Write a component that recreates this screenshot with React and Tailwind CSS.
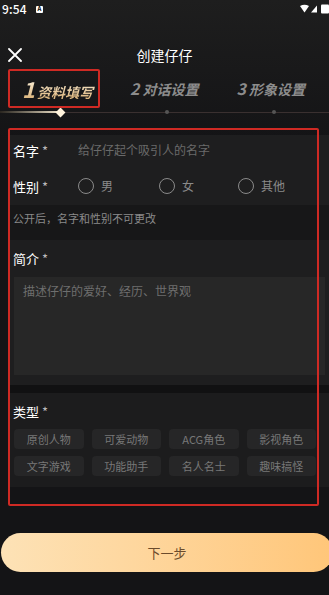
import React from "react";

const F = { fontFamily: '"Noto Sans CJK SC", "Noto Sans", sans-serif' };

function Radio({ label, className = "" }) {
  return (
    <div className={"flex items-center " + className}>
      <span className="w-[16px] h-[16px] rounded-full border-[1.5px] border-[#8a8a8a]" />
      <span className="ml-[7px] text-[12px] text-[#8a8a8a] leading-none">{label}</span>
    </div>
  );
}

const chips = ["原创人物", "可爱动物", "ACG角色", "影视角色", "文字游戏", "功能助手", "名人名士", "趣味搞怪"];

export default function App() {
  return (
    <div className="relative w-[329px] h-[595px] overflow-hidden bg-[#141416]" style={F}>
      <div className="absolute inset-x-0 top-0 h-[140px] bg-gradient-to-b from-[#1e1e1e] to-[#141416] pointer-events-none" />
      <div className="relative flex flex-col">
        {/* status bar */}
        <div className="h-[18px] flex items-center justify-between pl-[2px]">
          <div className="flex items-center">
            <span className="text-[12px] font-medium text-white leading-none tracking-[0.2px]">9:54</span>
            <span className="ml-[9px] w-[7px] h-[7px] bg-white rounded-[1px] flex items-center justify-center text-[6px] text-black font-bold leading-none">A</span>
          </div>
          <svg width="30" height="10" viewBox="0 0 30 10">
            <path d="M1 2 Q5.5 -0.5 10 2 L5.5 8.5 Z" fill="#fff" />
            <path d="M12 8.5 L18 1.5 L18 8.5 Z" fill="#fff" />
            <rect x="22" y="0.5" width="8" height="9" rx="1" fill="#fff" />
          </svg>
        </div>
        {/* header */}
        <div className="mt-[26px] h-[22px] relative flex items-center justify-center">
          <svg className="absolute left-[8px] top-[4px]" width="14" height="14" viewBox="0 0 14 14">
            <path d="M1 1 L13 13 M13 1 L1 13" stroke="#fff" strokeWidth="1.8" strokeLinecap="round" />
          </svg>
          <span className="text-[14px] text-white leading-none">创建仔仔</span>
        </div>
        {/* steps */}
        <div className="h-[42px] flex items-center pt-[2px]">
          <div className="ml-[22px] flex items-baseline italic font-bold bg-gradient-to-b from-[#fff8e6] to-[#dcb47a] bg-clip-text text-transparent pr-[2px]">
            <span className="text-[22px] leading-none">1</span>
            <span className="ml-[2px] text-[14px] leading-none">资料填写</span>
          </div>
          <div className="ml-[35px] flex items-baseline italic font-bold text-[#8c8c8c]">
            <span className="text-[16px] leading-none">2</span>
            <span className="ml-[3px] text-[14px] leading-none">对话设置</span>
          </div>
          <div className="ml-[38px] flex items-baseline italic font-bold text-[#8c8c8c]">
            <span className="text-[16px] leading-none">3</span>
            <span className="ml-[3px] text-[14px] leading-none">形象设置</span>
          </div>
        </div>
        {/* progress line */}
        <div className="relative h-[8px]">
          <div className="absolute left-0 right-0 top-[3.5px] h-[1px] bg-[#3a3030]" />
          <div className="absolute left-0 w-[60px] top-[3px] h-[2px] bg-gradient-to-r from-[#2a2620] to-[#f3e6cc]" />
          <div className="absolute left-[57px] top-[0.5px] w-[7px] h-[7px] rotate-45 bg-[#fff3dc]" />
          <div className="absolute left-[165px] top-[2px] w-[4px] h-[4px] rounded-full bg-[#555]" />
          <div className="absolute left-[272px] top-[2px] w-[4px] h-[4px] rounded-full bg-[#555]" />
        </div>
        {/* form */}
        <div className="mt-[19px] ml-[10px] flex flex-col">
          <div className="h-[70px] bg-[#1e1e1f] flex flex-col pt-[3px]">
            <div className="h-[24px] flex items-center pl-[3px]">
              <span className="w-[65px] text-[13px] text-white leading-none">名字 <span className="text-[#bbb]">*</span></span>
              <span className="text-[12px] text-[#6a6a6a] leading-none">给仔仔起个吸引人的名字</span>
            </div>
            <div className="mt-[12px] h-[24px] flex items-center pl-[3px]">
              <span className="w-[65px] text-[13px] text-white leading-none">性别 <span className="text-[#bbb]">*</span></span>
              <Radio label="男" />
              <Radio label="女" className="ml-[46px]" />
              <Radio label="其他" className="ml-[44px]" />
            </div>
          </div>
          <div className="h-[35px] bg-[#171718] pl-[3px] pt-[8px] flex items-start">
            <span className="text-[11px] text-[#8a8a8a] leading-none">公开后，名字和性别不可更改</span>
          </div>
          <div className="h-[145px] bg-[#1e1e1f] flex flex-col">
            <div className="h-[37px] flex items-center pl-[3px]">
              <span className="text-[13px] text-white leading-none">简介 <span className="text-[#bbb]">*</span></span>
            </div>
            <div className="ml-[4px] mr-[4px] h-[98px] bg-[#272727] px-[9px] pt-[8px] flex items-start">
              <span className="text-[12px] text-[#6e6e6e] leading-none">描述仔仔的爱好、经历、世界观</span>
            </div>
          </div>
          <div className="h-[8px] bg-[#111112]" />
          <div className="h-[94px] bg-[#1c1c1d] flex flex-col">
            <div className="h-[36px] flex items-center pl-[3px]">
              <span className="text-[13px] text-white leading-none">类型 <span className="text-[#bbb]">*</span></span>
            </div>
            <div className="ml-[4px] w-[302px] grid grid-cols-4 gap-x-[8px] gap-y-[7px]">
              {chips.map((c) => (
                <div key={c} className="h-[20px] rounded-[4px] bg-[#262627] flex items-center justify-center text-[11px] text-[#787878] leading-none">
                  {c}
                </div>
              ))}
            </div>
          </div>
        </div>
        {/* button */}
        <div className="mt-[46px] ml-[1px] w-[332px] h-[39px] rounded-full bg-gradient-to-r from-[#fde2b6] to-[#ffc679] flex items-center justify-center">
          <span className="text-[13px] text-[#6b4b2c] leading-none">下一步</span>
        </div>
      </div>
      {/* red annotation boxes */}
      <div className="absolute left-[8px] top-[69px] w-[92px] h-[39px] border-2 border-[#cf2a24] rounded-[2px] pointer-events-none" />
      <div className="absolute left-[8px] top-[128px] w-[311px] h-[378px] border-2 border-[#cf2a24] rounded-[2px] pointer-events-none" />
    </div>
  );
}
